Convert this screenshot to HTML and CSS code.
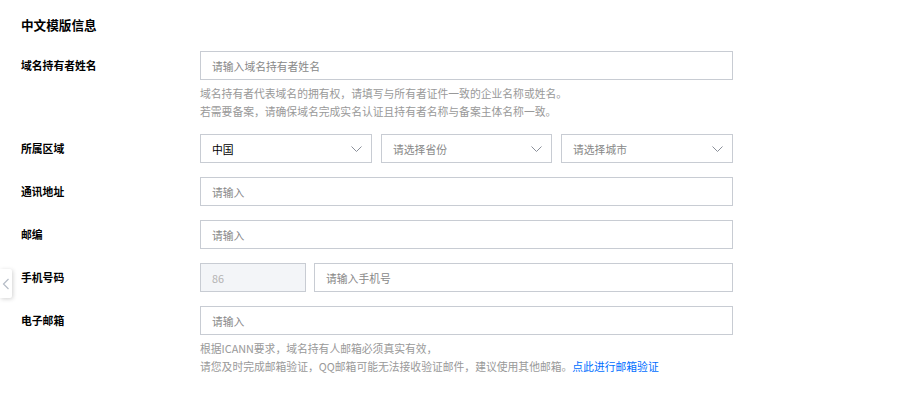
FILE: index.html
```html
<!DOCTYPE html>
<html lang="zh-CN">
<head>
<meta charset="utf-8">
<link rel="stylesheet" href="styles.css">
</head>
<body>
<div class="side-tab"><svg width="8" height="12" viewBox="0 0 8 12"><path d="M6.5 1 L1.5 6 L6.5 11" fill="none" stroke="#b5bcc6" stroke-width="1.2"/></svg></div>
<div class="page">
  <h2 class="title">中文模版信息</h2>

  <div class="row">
    <div class="label">域名持有者姓名</div>
    <div class="field">
      <div class="input"><span class="ph">请输入域名持有者姓名</span></div>
      <div class="help">
        <p>域名持有者代表域名的拥有权，请填写与所有者证件一致的企业名称或姓名。</p>
        <p>若需要备案，请确保域名完成实名认证且持有者名称与备案主体名称一致。</p>
      </div>
    </div>
  </div>

  <div class="row">
    <div class="label">所属区域</div>
    <div class="field selects">
      <div class="input select"><span class="val">中国</span><svg class="chev" width="11" height="6" viewBox="0 0 11 6"><path d="M0.5 0.5 L5.5 5.5 L10.5 0.5" fill="none" stroke="#8a8f99" stroke-width="1"/></svg></div>
      <div class="input select"><span class="ph">请选择省份</span><svg class="chev" width="11" height="6" viewBox="0 0 11 6"><path d="M0.5 0.5 L5.5 5.5 L10.5 0.5" fill="none" stroke="#8a8f99" stroke-width="1"/></svg></div>
      <div class="input select"><span class="ph">请选择城市</span><svg class="chev" width="11" height="6" viewBox="0 0 11 6"><path d="M0.5 0.5 L5.5 5.5 L10.5 0.5" fill="none" stroke="#8a8f99" stroke-width="1"/></svg></div>
    </div>
  </div>

  <div class="row">
    <div class="label">通讯地址</div>
    <div class="field"><div class="input"><span class="ph">请输入</span></div></div>
  </div>

  <div class="row">
    <div class="label">邮编</div>
    <div class="field"><div class="input"><span class="ph">请输入</span></div></div>
  </div>

  <div class="row">
    <div class="label">手机号码</div>
    <div class="field phone">
      <div class="input prefix"><span class="dis">86</span></div>
      <div class="input grow"><span class="ph">请输入手机号</span></div>
    </div>
  </div>

  <div class="row">
    <div class="label">电子邮箱</div>
    <div class="field">
      <div class="input"><span class="ph">请输入</span></div>
      <div class="help">
        <p>根据ICANN要求，域名持有人邮箱必须真实有效，</p>
        <p>请您及时完成邮箱验证，QQ邮箱可能无法接收验证邮件，建议使用其他邮箱。<a class="link">点此进行邮箱验证</a></p>
      </div>
    </div>
  </div>
</div>
</body>
</html>
```

FILE: styles.css
```css
html, body {
  margin: 0;
  padding: 0;
  background: #fff;
}
body {
  font-family: "Noto Sans CJK SC", "Noto Sans", sans-serif;
  font-size: 10.8px;
  color: #000;
}
.page {
  padding: 15px 0 0 21px;
  width: 712px;
}
.title {
  margin: 0 0 16px 0;
  font-size: 12.6px;
  line-height: 20px;
  font-weight: 700;
  color: #000;
}
.row {
  display: flex;
  align-items: flex-start;
  margin-bottom: 14px;
}
.label {
  width: 179px;
  flex: none;
  line-height: 28px;
  font-weight: 700;
  color: #000;
}
.field {
  width: 533px;
}
.input {
  box-sizing: border-box;
  height: 29px;
  border: 1px solid #c8ccd3;
  background: #fff;
  padding: 0 11px;
  display: flex;
  align-items: center;
  line-height: 18px;
}
.ph {
  color: #888;
}
.val {
  color: #000;
}
.selects {
  display: grid;
  grid-template-columns: 172px 171px 172px;
  column-gap: 9px;
}
.select {
  justify-content: space-between;
  padding-right: 9px;
}
.chev {
  display: block;
}
.phone {
  display: flex;
  gap: 8px;
}
.prefix {
  width: 106px;
  flex: none;
  background: #f3f5f8;
}
.dis {
  color: #b3b3b3;
}
.grow {
  flex: 1;
}
.help {
  margin-top: 4px;
  color: #999;
  font-size: 10.8px;
  line-height: 18px;
}
.help p {
  margin: 0;
}
.link {
  color: #006eff;
  cursor: pointer;
}
.side-tab {
  position: absolute;
  left: 0;
  top: 269px;
  width: 12px;
  height: 29px;
  background: #fff;
  border-radius: 0 2px 2px 0;
  box-shadow: 1px 1px 4px rgba(0, 0, 0, 0.18);
  display: flex;
  align-items: center;
  justify-content: center;
}
```
